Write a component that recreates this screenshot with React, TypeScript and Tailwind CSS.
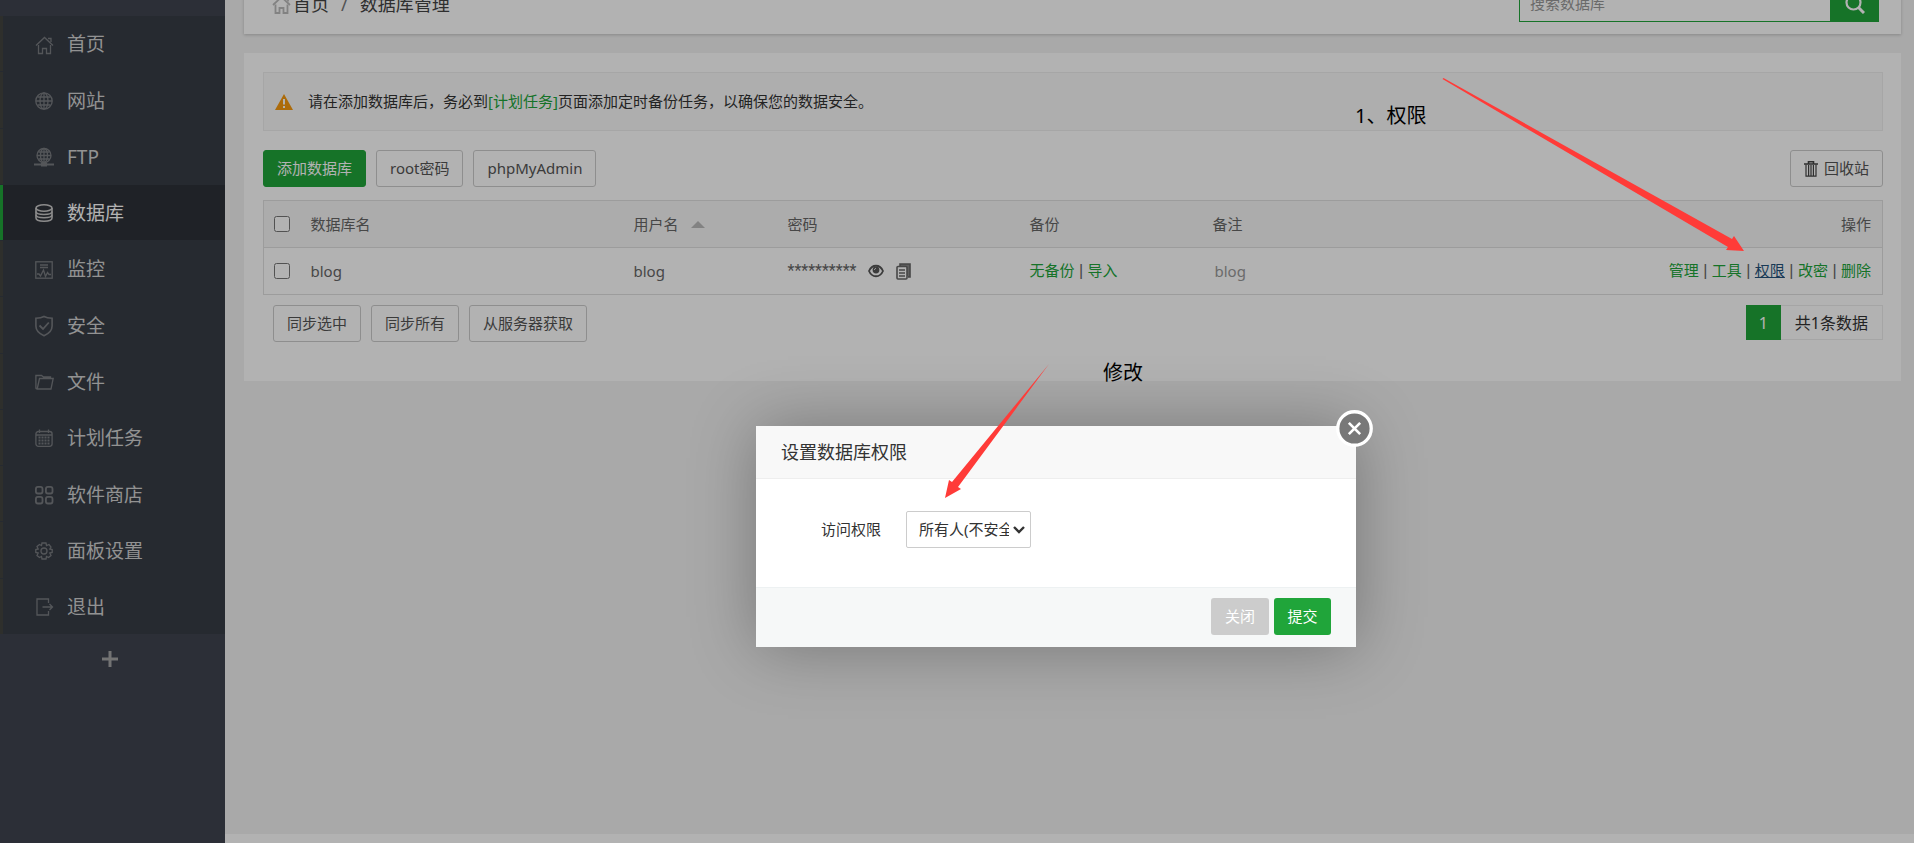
import { useState } from 'react';
import type { ReactNode } from 'react';

interface MenuItem {
  label: string;
  icon: ReactNode;
  active?: boolean;
}

const HomeShape = () => (
  <>
    <path d="M1 9.5 L9.5 1.5 L18 9.5" />
    <path d="M3.5 9 V17.5 H7.5 V12.5 H11.5 V17.5 H15.5 V9" />
    <path d="M13 2.5 H16 V6" />
  </>
);

const menu: MenuItem[] = [
  { label: '首页', icon: <HomeShape /> },
  {
    label: '网站',
    icon: (
      <>
        <circle cx="9" cy="9" r="8.2" />
        <ellipse cx="9" cy="9" rx="4" ry="8.2" />
        <path d="M9 1 V17 M1 9 H17 M2.5 5 H15.5 M2.5 13 H15.5" />
      </>
    ),
  },
  {
    label: 'FTP',
    icon: (
      <>
        <circle cx="9" cy="7.5" r="7" />
        <ellipse cx="9" cy="7.5" rx="3.5" ry="7" />
        <path d="M9 1 V14 M2 7.5 H16 M3.5 4 H14.5 M3.5 11 H14.5" />
        <path d="M-1 16.5 H19" strokeWidth="2" />
        <path d="M6 16.5 H12" strokeWidth="4" />
      </>
    ),
  },
  {
    label: '数据库',
    active: true,
    icon: (
      <g strokeWidth="1.6">
        <ellipse cx="9" cy="4" rx="8" ry="3.2" />
        <path d="M1 4 V14 C1 18.3 17 18.3 17 14 V4" />
        <path d="M1 7.5 C1 11.5 17 11.5 17 7.5 M1 10.8 C1 14.8 17 14.8 17 10.8" />
      </g>
    ),
  },
  {
    label: '监控',
    icon: (
      <>
        <rect x="0.8" y="0.8" width="16.4" height="16.4" />
        <path d="M5 4 H13 M5 6.5 H13" />
        <path d="M2 13 H4 L5.5 15 L8.5 9 L10.5 15.5 L12.5 11.5 L14 13.5 H16" />
      </>
    ),
  },
  {
    label: '安全',
    icon: (
      <g strokeWidth="1.6">
        <path d="M9 -0.5 C6.5 1 3.5 1.2 0.9 1.2 V9 C0.9 14 5 17 9 18.7 C13 17 17.1 14 17.1 9 V1.2 C14.5 1.2 11.5 1 9 -0.5 Z" />
        <path d="M4.5 8.5 L8 12 L13.8 5.5" strokeWidth="1.8" />
      </g>
    ),
  },
  {
    label: '文件',
    icon: (
      <path d="M2.2 16 L4.5 5.5 H18.2 L16 16 H2.2 C1.4 16 0.9 15.5 0.9 15 V2.5 H6.5 L8.5 4 H15.5 V5.5" />
    ),
  },
  {
    label: '计划任务',
    icon: (
      <>
        <rect x="0.9" y="2.5" width="16.2" height="14.8" rx="2.5" />
        <path d="M1 6 H17 M4.5 0.5 V4 M13.5 0.5 V4" />
        <path d="M3.5 8.5 H14.5 M3.5 11.5 H14.5 M3.5 14.5 H14.5" strokeWidth="1.8" strokeDasharray="2 1" />
      </>
    ),
  },
  {
    label: '软件商店',
    icon: (
      <g strokeWidth="1.8">
        <rect x="0.9" y="0.9" width="6.6" height="6.6" rx="2" />
        <rect x="10.9" y="0.9" width="6.6" height="6.6" rx="2" />
        <rect x="0.9" y="10.9" width="6.6" height="6.6" rx="2" />
        <rect x="10.9" y="10.9" width="6.6" height="6.6" rx="2" />
      </g>
    ),
  },
  {
    label: '面板设置',
    icon: (
      <>
        <path d="M7 1 H11 L11.5 3.5 L14 2.5 L16 5 L14.8 7 L17.2 7.5 V10.5 L14.8 11 L16 13.5 L13.5 15.5 L11.5 14.5 L11 17 H7 L6.5 14.5 L4.5 15.5 L2 13.5 L3.2 11 L0.8 10.5 V7.5 L3.2 7 L2 4.5 L4.5 2.5 L6.5 3.5 Z" />
        <circle cx="9" cy="9" r="3" />
      </>
    ),
  },
  {
    label: '退出',
    icon: (
      <>
        <path d="M13.5 5 V1 H2 V17 H13.5 V13" />
        <path d="M7.5 9 H17.5 M14.5 6 L17.5 9 L14.5 12" />
      </>
    ),
  },
];

const actions = ['管理', '工具', '权限', '改密', '删除'];

const outlineButton =
  'h-[37px] rounded-[3px] border border-[#ccc] bg-white px-[13px] text-[15px] text-[#555] cursor-pointer';

function Sidebar() {
  return (
    <aside className="w-[225px] shrink-0 bg-[#3f4450] pt-4">
      <ul className="flex h-[618px] flex-col gap-px bg-[#373d46]">
        {menu.map((item) => (
          <li key={item.label} className="flex-1">
            <a
              href="#"
              className={`flex h-full items-center border-l-[3px] pt-0.5 pl-8 text-[19px] ${
                item.active
                  ? 'border-[#20a53a] bg-[#2d3138] text-white'
                  : 'border-[#42443f] bg-[#373d46] text-[#d2d2d2]'
              }`}
            >
              <svg
                viewBox="0 0 18 18"
                className={`mr-3.5 size-[18px] overflow-visible ${item.active ? 'text-[#c8c8c8]' : 'text-[#797c80]'}`}
                fill="none"
                stroke="currentColor"
                strokeWidth="1.3"
              >
                {item.icon}
              </svg>
              {item.label}
            </a>
          </li>
        ))}
      </ul>
      <button aria-label="添加菜单" className="flex h-[50px] w-[220px] items-center justify-center text-[#a5a5a5]">
        <svg viewBox="0 0 16 16" className="size-4" stroke="currentColor" strokeWidth="3">
          <path d="M8 0 V16 M0 8 H16" />
        </svg>
      </button>
    </aside>
  );
}

function Topbar() {
  return (
    <header className="-mt-[27px] flex h-[61px] items-center justify-between bg-white pr-[22px] pl-7 shadow-[0_1px_3px_rgba(0,0,0,0.2)]">
      <nav className="flex items-center pt-0.5 text-[18px] text-[#444]">
        <svg viewBox="0 0 19 18" className="mr-0.5 size-[19px] text-[#bbb]" fill="none" stroke="currentColor" strokeWidth="1.8">
          <HomeShape />
        </svg>
        <a href="#">首页</a>
        <span className="mx-3 text-[#777]">/</span>
        <span>数据库管理</span>
      </nav>
      <form className="flex" onSubmit={(e) => e.preventDefault()}>
        <input
          type="text"
          aria-label="搜索数据库"
          placeholder="搜索数据库"
          className="h-[37px] w-[312px] border border-[#20a53a] px-2.5 pb-0.5 text-[15px] outline-none placeholder:text-[#999]"
        />
        <button type="submit" aria-label="搜索" className="flex w-12 items-center justify-center bg-[#20a53a]">
          <svg viewBox="0 0 20 20" className="size-5" fill="none" stroke="#fff" strokeWidth="2.2">
            <circle cx="8.5" cy="8.5" r="7" />
            <path d="M13.5 13.5 L19 19" strokeWidth="3" />
          </svg>
        </button>
      </form>
    </header>
  );
}

function Separator() {
  return <span className="font-['Liberation_Sans',sans-serif] text-[16px] whitespace-pre"> | </span>;
}

function DatabaseTable() {
  return (
    <table className="mt-[13px] w-full table-fixed border border-[#e0e0e0] text-left text-[15px] text-[#666]">
      <colgroup>
        <col className="w-[37px]" />
        <col />
        <col className="w-[154px]" />
        <col className="w-[242px]" />
        <col className="w-[183px]" />
        <col className="w-[182px]" />
        <col className="w-[498px]" />
      </colgroup>
      <thead>
        <tr className="h-[47px] border-b border-[#e0e0e0] bg-[#f6f6f6]">
          <th className="pl-2.5">
            <input type="checkbox" aria-label="全选" className="block size-4" />
          </th>
          <th className="pl-2.5 font-normal">数据库名</th>
          <th className="pl-2.5 font-normal">
            <span className="flex items-center gap-3">
              用户名
              <svg viewBox="0 0 14 7" className="h-[7px] w-3.5" fill="#bbb">
                <path d="M7 0 L14 7 H0 Z" />
              </svg>
            </span>
          </th>
          <th className="pl-2.5 font-normal">密码</th>
          <th className="pl-2.5 font-normal">备份</th>
          <th className="pl-2.5 font-normal">备注</th>
          <th className="pr-[11px] text-right font-normal">操作</th>
        </tr>
      </thead>
      <tbody>
        <tr className="h-[47px]">
          <td className="pl-2.5">
            <input type="checkbox" aria-label="选择 blog" className="block size-4" />
          </td>
          <td className="pl-2.5">blog</td>
          <td className="pl-2.5">blog</td>
          <td className="pl-2.5">
            <span className="flex items-center">
              <span className="w-20 font-[Roboto,sans-serif] text-[16px]">**********</span>
              <button aria-label="显示密码">
                <svg viewBox="0 0 16 14" className="h-3.5 w-4" fill="none" stroke="#555" strokeWidth="1.8">
                  <path d="M1 7 C4 0 12 0 15 7 C12 14 4 14 1 7 Z" />
                  <circle cx="8" cy="6" r="3.4" fill="#555" stroke="none" />
                  <path d="M6.5 6 C6.5 5 7 4.5 8 4.3" stroke="#fff" strokeWidth="1" />
                </svg>
              </button>
              <button aria-label="复制密码" className="ml-3">
                <svg viewBox="0 0 15 17" className="h-[17px] w-[15px]" fill="none" stroke="#666" strokeWidth="1.6">
                  <path d="M4 3 V1 H14 V14 H12" fill="#888" />
                  <rect x="1" y="3.5" width="10" height="12.5" rx="1" fill="#fff" />
                  <path d="M3 7 H9 M3 10 H9 M3 13 H9" strokeWidth="1.4" />
                </svg>
              </button>
            </span>
          </td>
          <td className="pl-2.5">
            <a href="#" className="text-[#20a53a]">无备份</a>
            <Separator />
            <a href="#" className="text-[#20a53a]">导入</a>
          </td>
          <td className="pl-3 text-[#999]">blog</td>
          <td className="pr-[11px] text-right">
            {actions.map((action, i) => (
              <span key={action}>
                {i > 0 && <Separator />}
                <a href="#" className={action === '权限' ? 'text-[#23527c] underline' : 'text-[#20a53a]'}>
                  {action}
                </a>
              </span>
            ))}
          </td>
        </tr>
      </tbody>
    </table>
  );
}

function PermissionModal() {
  const [access, setAccess] = useState('all');

  return (
    <div
      role="dialog"
      aria-labelledby="modal-title"
      className="absolute top-[426px] left-[756px] w-[600px] bg-white shadow-[1px_1px_62px_rgba(0,0,0,0.3)]"
    >
      <h3 id="modal-title" className="h-[53px] border-b border-[#eee] bg-[#f8f8f8] pl-[25px] text-[18px] leading-[53px] text-[#333]">
        设置数据库权限
      </h3>
      <div className="flex h-[108px] items-center pb-2 pl-[65px] text-[15px] text-[#333]">
        <label htmlFor="access" className="mr-[25px]">访问权限</label>
        <div className="relative">
          <select
            id="access"
            value={access}
            onChange={(e) => setAccess(e.target.value)}
            className="h-[37px] w-[125px] appearance-none rounded-[2px] border border-[#ccc] bg-white pr-[21px] pl-3"
          >
            <option value="local">本地服务器</option>
            <option value="all">所有人(不安全)</option>
            <option value="ip">指定IP</option>
          </select>
          <svg viewBox="0 0 12 8" className="pointer-events-none absolute top-[15px] right-1.5 h-2 w-3" fill="none" stroke="#333" strokeWidth="2.4">
            <path d="M1 1 L6 6 L11 1" />
          </svg>
        </div>
      </div>
      <div className="flex h-[60px] items-center justify-end gap-[5px] border-t border-[#edf1f2] bg-[#f6f8f8] pr-[25px] pb-0.5 text-[15px] text-white">
        <button className="h-[37px] w-[58px] rounded-[3px] bg-[#ccc]">关闭</button>
        <button className="h-[37px] w-[57px] rounded-[3px] bg-[#20a53a]">提交</button>
      </div>
      <button aria-label="关闭窗口" className="absolute -top-4 -right-[17px]">
        <svg viewBox="0 0 36 36" className="size-[37px]" fill="none" stroke="#fff">
          <circle cx="18" cy="18" r="16.3" fill="#787878" strokeWidth="3.2" />
          <path d="M12.5 12.5 L23.5 23.5 M23.5 12.5 L12.5 23.5" strokeWidth="2.6" />
        </svg>
      </button>
    </div>
  );
}

function Annotations() {
  return (
    <div className="pointer-events-none absolute inset-0 text-[20px] leading-7 text-black">
      <span className="absolute top-[102px] left-[1355px]">1、权限</span>
      <span className="absolute top-[359px] left-[1103px]">修改</span>
      <svg className="absolute top-[78px] left-[1442px] h-[175px] w-[304px]" viewBox="1442 78 304 175" fill="#ff3b38">
        <path d="M1442.5 79 L1443.5 78 L1732 239 L1734 236 L1744 251 L1726 250 L1728 247 Z" />
      </svg>
      <svg className="absolute top-[364px] left-[944px] h-[135px] w-[106px]" viewBox="944 364 106 135" fill="#ff3b38">
        <path d="M1049 364 L958 487 L961 489 L945 498 L949 480 L952 482 Z" />
      </svg>
    </div>
  );
}

export default function App() {
  return (
    <div className="relative flex min-h-screen overflow-hidden bg-[#f2f2f2] font-['Noto_Sans','Noto_Sans_CJK_SC',sans-serif]">
      <Sidebar />
      <div className="flex min-w-0 flex-1 flex-col">
        <main className="flex-1 pr-[13px] pl-[19px]">
          <Topbar />
          <section className="mt-[19px] h-[328px] bg-white pt-[19px] pr-[18px] pl-[19px]">
            <div className="flex h-[59px] items-center border border-[#eee] bg-[#fafafa] pl-[11px] text-[15px] text-[#333]">
              <svg viewBox="0 0 18 16" className="mr-[15px] h-4 w-[18px]">
                <path d="M9 0 L18 16 H0 Z" fill="#f79a10" />
                <path d="M9 5 V10.5 M9 12 V14" stroke="#fff" strokeWidth="2" />
              </svg>
              <p>
                请在添加数据库后，务必到
                <a href="#" className="text-[#20a53a]">[计划任务]</a>
                页面添加定时备份任务，以确保您的数据安全。
              </p>
            </div>
            <div className="mt-[19px] flex gap-2.5">
              <button className="h-[37px] rounded-[3px] border border-[#20a53a] bg-[#20a53a] px-[13px] text-[15px] text-white">
                添加数据库
              </button>
              <button className={outlineButton}>root密码</button>
              <button className={outlineButton}>phpMyAdmin</button>
              <button className={`${outlineButton} ml-auto flex items-center gap-1.5`}>
                <svg viewBox="0 0 14 16" className="h-4 w-3.5" fill="none" stroke="#444" strokeWidth="1.4">
                  <path d="M0 3 H14 M4.5 2.5 V0.8 H9.5 V2.5" strokeWidth="1.6" />
                  <path d="M2 3.5 V15.2 H12 V3.5 M4.6 4 V15 M7 4 V15 M9.4 4 V15" strokeWidth="1.2" />
                </svg>
                回收站
              </button>
            </div>
            <DatabaseTable />
            <div className="mt-2.5 flex items-start pl-2.5">
              <div className="flex gap-2.5">
                <button className={outlineButton}>同步选中</button>
                <button className={outlineButton}>同步所有</button>
                <button className={outlineButton}>从服务器获取</button>
              </div>
              <div className="ml-auto flex h-[35px] items-center text-[16px]">
                <span className="flex h-full w-[35px] items-center justify-center bg-[#20a53a] text-white">1</span>
                <span className="flex h-full items-center border border-l-0 border-[#ececec] px-3.5 text-[#333]">共1条数据</span>
              </div>
            </div>
          </section>
        </main>
        <footer className="h-[9px] bg-white" />
      </div>
      <div className="absolute inset-0 bg-black/30" />
      <PermissionModal />
      <Annotations />
    </div>
  );
}
